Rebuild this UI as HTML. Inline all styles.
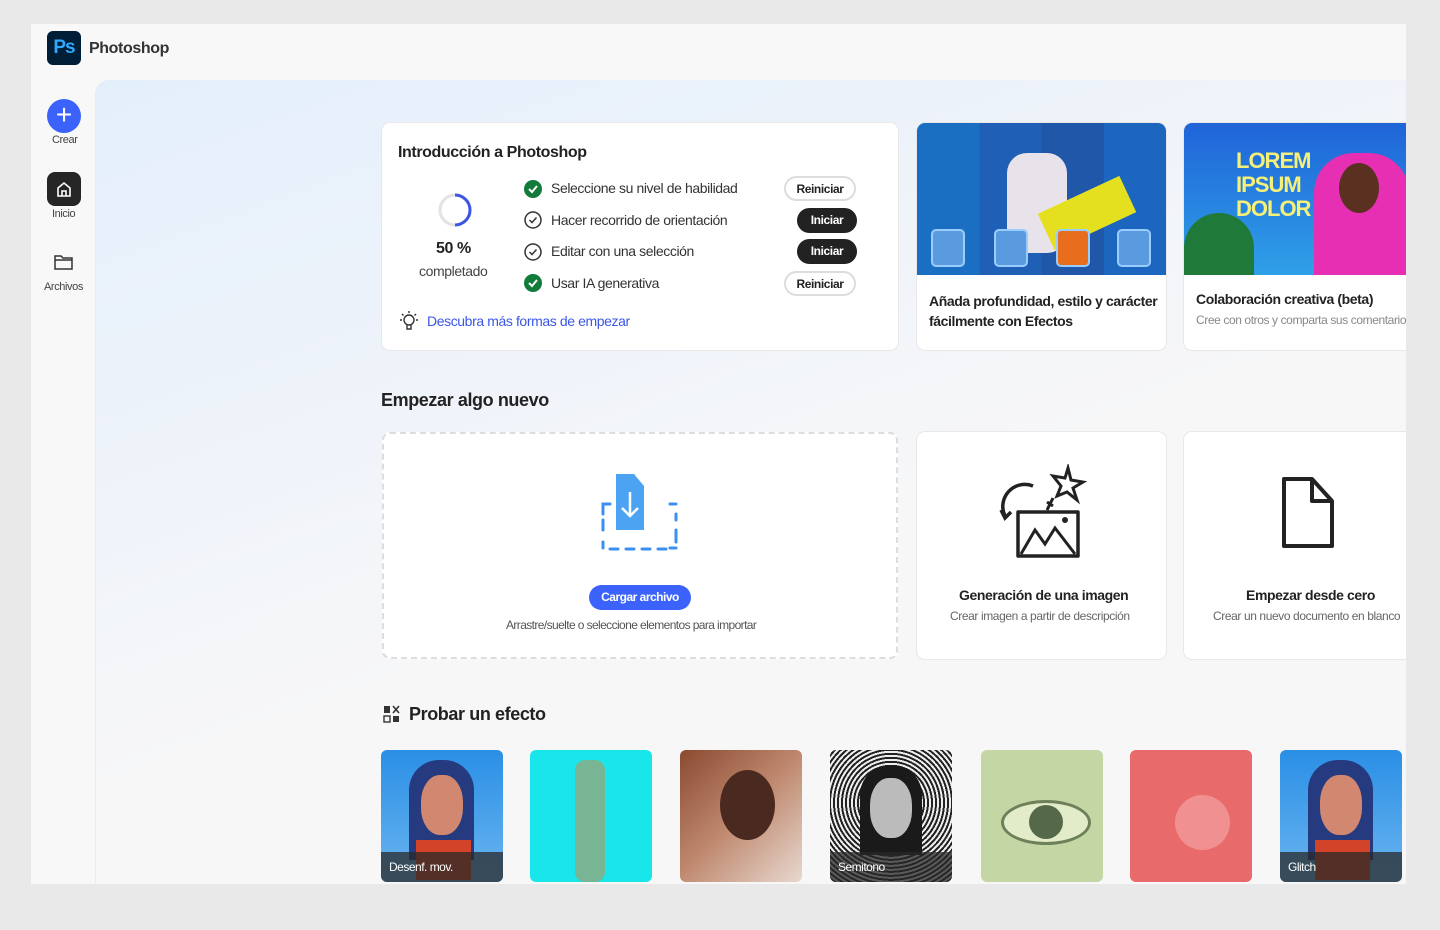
<!DOCTYPE html>
<html><head><meta charset="utf-8"><style>
*{box-sizing:border-box;margin:0;padding:0}
body{width:1440px;height:930px;background:#e9e9e9;font-family:"Liberation Sans",sans-serif;position:relative;overflow:hidden;color:#222}
.app{position:absolute;left:31px;top:24px;width:1375px;height:860px;background:#f8f8f8;overflow:hidden}
.main{position:absolute;left:64px;top:56px;width:1320px;height:820px;border-radius:14px 0 0 0;background:linear-gradient(160deg,#e4effc 0%,#eef3fa 30%,#f7f7f8 55%);border-left:1px solid #ececec}
.a{position:absolute}
.t{font-size:14px;letter-spacing:-0.4px;white-space:nowrap}
.card{position:absolute;background:#fff;border-radius:8px;box-shadow:0 0 0 1px #e8e8e8}
.btn{position:absolute;width:72px;height:25px;border-radius:13px;font-size:12px;font-weight:bold;text-align:center;line-height:23px;letter-spacing:-0.4px}
.bw{border:2px solid #ddd;background:#fff;color:#222}
.bb{background:#222;color:#fff;border:1px solid #222}
.eff{position:absolute;top:750px;width:122px;height:132px;border-radius:6px;overflow:hidden}
.lab{position:absolute;left:0;bottom:0;width:100%;height:30px;background:rgba(40,40,40,.75);color:#fff;font-size:12px;line-height:30px;padding-left:8px;letter-spacing:-0.5px}
</style></head><body>
<div class="app">
 <div class="a" style="left:16px;top:7px;width:34px;height:34px;background:#001e36;border-radius:6px;color:#31a8ff;font-weight:bold;font-size:19px;line-height:34px;text-align:center;letter-spacing:-1px">Ps</div>
 <div class="a t" style="left:58px;top:16px;font-size:16px;font-weight:bold;color:#333">Photoshop</div>
 <div class="a" style="left:16px;top:75px;width:34px;height:34px;border-radius:50%;background:#3b63fb;color:#fff;font-size:28px;line-height:32px;text-align:center">+</div>
 <div class="a t" style="left:21px;top:110px;font-size:11px;color:#444">Crear</div>
 <div class="a" style="left:16px;top:148px;width:34px;height:34px;border-radius:8px;background:#262626"><svg width="34" height="34"><path d="M11 16 L17 11 L23 16 V24 H11 Z M15 24 V19 H19 V24" fill="none" stroke="#fff" stroke-width="1.6"/></svg></div>
 <div class="a t" style="left:21px;top:184px;font-size:11px;color:#444">Inicio</div>
 <svg class="a" style="left:22px;top:229px" width="22" height="18"><path d="M2 3 H8 L10 5 H19 V16 H2 Z M2 7 H19" fill="none" stroke="#333" stroke-width="1.5"/></svg>
 <div class="a t" style="left:13px;top:257px;font-size:11px;color:#444">Archivos</div>
</div>
<div class="main" style="left:95px;top:80px"></div>

<div class="card" style="left:382px;top:123px;width:516px;height:227px">
 <div class="a t" style="left:16px;top:21px;font-size:16px;font-weight:bold">Introducción a Photoshop</div>
 <svg class="a" style="left:55px;top:69px" width="36" height="36"><circle cx="18" cy="18" r="15" fill="none" stroke="#e3e3e3" stroke-width="3"/><path d="M18 3 A15 15 0 0 1 18 33" fill="none" stroke="#3b55e6" stroke-width="3"/></svg>
 <div class="a t" style="left:54px;top:117px;font-size:16px;font-weight:bold">50 %</div>
 <div class="a t" style="left:37px;top:140px;font-size:14px;color:#444">completado</div>
 <svg class="a" style="left:141px;top:56px" width="20" height="120">
  <circle cx="10" cy="10" r="9" fill="#127a3b"/><path d="M6 10 L9 13 L14 7" fill="none" stroke="#fff" stroke-width="2"/>
  <circle cx="10" cy="41" r="8" fill="none" stroke="#333" stroke-width="1.5"/><path d="M6.5 41 L9 43.5 L13.5 38.5" fill="none" stroke="#333" stroke-width="1.5"/>
  <circle cx="10" cy="73" r="8" fill="none" stroke="#333" stroke-width="1.5"/><path d="M6.5 73 L9 75.5 L13.5 70.5" fill="none" stroke="#333" stroke-width="1.5"/>
  <circle cx="10" cy="104" r="9" fill="#127a3b"/><path d="M6 104 L9 107 L14 101" fill="none" stroke="#fff" stroke-width="2"/>
 </svg>
 <div class="a t" style="left:169px;top:57px;color:#333">Seleccione su nivel de habilidad</div>
 <div class="a t" style="left:169px;top:89px;color:#333">Hacer recorrido de orientación</div>
 <div class="a t" style="left:169px;top:120px;color:#333">Editar con una selección</div>
 <div class="a t" style="left:169px;top:152px;color:#333">Usar IA generativa</div>
 <div class="btn bw" style="left:402px;top:53px">Reiniciar</div>
 <div class="btn bb" style="left:415px;top:85px;width:60px">Iniciar</div>
 <div class="btn bb" style="left:415px;top:116px;width:60px">Iniciar</div>
 <div class="btn bw" style="left:402px;top:148px">Reiniciar</div>
 <svg class="a" style="left:17px;top:187px" width="20" height="22"><circle cx="10" cy="10" r="5" fill="none" stroke="#333" stroke-width="1.4"/><path d="M8 15 V19 H12 V15 M10 1 V3 M3 4 L4.5 5.5 M17 4 L15.5 5.5 M1 10 H3 M17 10 H19" stroke="#333" stroke-width="1.4" fill="none"/></svg>
 <div class="a t" style="left:45px;top:190px;color:#3b55e6">Descubra más formas de empezar</div>
</div>

<div class="card" style="left:917px;top:123px;width:249px;height:227px;overflow:hidden">
 <div class="a" style="left:0;top:0;width:249px;height:152px;background:linear-gradient(90deg,#1b6fc2 0 25%,#1f5fb5 25% 50%,#2157a8 50% 75%,#1c66c0 75%)"></div>
 <div class="a" style="left:90px;top:30px;width:60px;height:100px;background:#e8e2ea;border-radius:20px"></div>
 <div class="a" style="left:125px;top:70px;width:90px;height:40px;background:#e4e020;transform:rotate(-25deg)"></div>
 <div class="a" style="left:14px;top:106px;width:34px;height:38px;background:#5a9be0;border-radius:5px;border:2px solid #9cf"></div>
 <div class="a" style="left:77px;top:106px;width:34px;height:38px;background:#5a9be0;border-radius:5px;border:2px solid #9cf"></div>
 <div class="a" style="left:139px;top:106px;width:34px;height:38px;background:#e86e1e;border-radius:5px;border:2px solid #9cf"></div>
 <div class="a" style="left:200px;top:106px;width:34px;height:38px;background:#5a9be0;border-radius:5px;border:2px solid #9cf"></div>
 <div class="a t" style="left:12px;top:168px;font-weight:bold;font-size:14px;line-height:20px;white-space:normal;width:235px">Añada profundidad, estilo y carácter fácilmente con Efectos</div>
</div>

<div class="card" style="left:1184px;top:123px;width:240px;height:227px;overflow:hidden">
 <div class="a" style="left:0;top:0;width:240px;height:152px;background:linear-gradient(180deg,#1f64d8,#2fa0e8)"></div>
 <div class="a" style="left:0;top:90px;width:70px;height:62px;background:#1f7a3a;border-radius:40px 40px 0 0"></div>
 <div class="a" style="left:130px;top:30px;width:95px;height:122px;background:#e72fb3;border-radius:40px 40px 0 0"></div>
 <div class="a" style="left:155px;top:40px;width:40px;height:50px;background:#5a3020;border-radius:50%"></div>
 <div class="a" style="left:52px;top:26px;color:#f5f07a;font-weight:bold;font-size:22px;line-height:24px;letter-spacing:-1px">LOREM<br>IPSUM<br>DOLOR</div>
 <div class="a t" style="left:12px;top:168px;font-weight:bold">Colaboración creativa (beta)</div>
 <div class="a t" style="left:12px;top:190px;font-size:12px;color:#888">Cree con otros y comparta sus comentarios</div>
</div>

<div class="a t" style="left:381px;top:390px;font-size:18px;font-weight:bold">Empezar algo nuevo</div>
<div class="a" style="left:382px;top:432px;width:516px;height:227px;border:2px dashed #ddd;border-radius:8px;background:#fff"></div>
<svg class="a" style="left:598px;top:472px" width="84" height="80"><path d="M18 2 H36 L46 14 V58 H18 Z" fill="#4ba3f2"/><path d="M32 20 V44 M24 36 L32 44 L40 36" stroke="#fff" stroke-width="2.5" fill="none"/><path d="M12 32 H5 V42 M5 48 V58 M5 76 V70 M78 32 H72 M78 42 V48 M78 58 V70 M78 76 H72 M12 77 H20 M28 77 H36 M44 77 H52 M60 77 H68" stroke="#3a8ff0" stroke-width="3" fill="none" stroke-linecap="round"/></svg>
<div class="a" style="left:589px;top:585px;width:102px;height:25px;border-radius:13px;background:#3b63fb;color:#fff;font-size:12px;font-weight:bold;text-align:center;line-height:25px;letter-spacing:-0.5px">Cargar archivo</div>
<div class="a t" style="left:506px;top:618px;font-size:12px;color:#555;letter-spacing:-0.6px">Arrastre/suelte o seleccione elementos para importar</div>

<div class="card" style="left:917px;top:432px;width:249px;height:227px">
 <svg class="a" style="left:76px;top:32px" width="96" height="96"><path d="M25 48 H85 V92 H25 Z" fill="none" stroke="#222" stroke-width="3.5" stroke-linejoin="round"/><path d="M28 90 L42 66 L52 80 L62 64 L82 90" fill="none" stroke="#222" stroke-width="3"/><circle cx="72" cy="56" r="3" fill="#222"/><path d="M40 22 A22 22 0 0 0 12 52 M8 46 L12 54 L18 48" fill="none" stroke="#222" stroke-width="3.5"/><path d="M75 4 L78 16 L90 18 L80 24 L84 36 L74 28 L64 32 L68 22 L60 12 L72 14 Z" fill="none" stroke="#222" stroke-width="3"/><path d="M54 38 L60 42 M60 34 L54 46" stroke="#222" stroke-width="3"/></svg>
 <div class="a t" style="left:42px;top:155px;font-weight:bold">Generación de una imagen</div>
 <div class="a t" style="left:33px;top:177px;font-size:12px;color:#666">Crear imagen a partir de descripción</div>
</div>
<div class="card" style="left:1184px;top:432px;width:240px;height:227px">
 <svg class="a" style="left:94px;top:44px" width="60" height="76"><path d="M6 3 H34 L54 25 V70 H6 Z M34 3 V25 H54" fill="none" stroke="#222" stroke-width="4" stroke-linejoin="round"/></svg>
 <div class="a t" style="left:62px;top:155px;font-weight:bold">Empezar desde cero</div>
 <div class="a t" style="left:29px;top:177px;font-size:12px;color:#666">Crear un nuevo documento en blanco</div>
</div>

<svg class="a" style="left:383px;top:705px" width="18" height="18"><rect x="1" y="1" width="6" height="7" fill="#333"/><path d="M10 1 L16 8 M16 1 L10 8" stroke="#333" stroke-width="1.6"/><rect x="1" y="11" width="6" height="6" fill="none" stroke="#333" stroke-width="1.4"/><rect x="10" y="11" width="6" height="6" fill="#333"/></svg>
<div class="a t" style="left:409px;top:704px;font-size:18px;font-weight:bold">Probar un efecto</div>

<div class="eff" style="left:381px;background:linear-gradient(180deg,#2a8fe5,#6ab5f0)"><div class="a" style="left:28px;top:10px;width:65px;height:100px;background:#263a80;border-radius:30px 30px 0 0"></div><div class="a" style="left:40px;top:25px;width:42px;height:60px;background:#d28870;border-radius:45%"></div><div class="a" style="left:35px;top:90px;width:55px;height:40px;background:#d2432a"></div><div class="lab">Desenf. mov.</div></div>
<div class="eff" style="left:530px;background:#19e6ea"><div class="a" style="left:45px;top:10px;width:30px;height:122px;background:#a0a070;opacity:.7;border-radius:10px"></div></div>
<div class="eff" style="left:680px;background:linear-gradient(135deg,#8a4a30,#c08a70 50%,#e8d8d0)"><div class="a" style="left:40px;top:20px;width:55px;height:70px;background:#4a2a20;border-radius:50%"></div></div>
<div class="eff" style="left:830px;background:repeating-radial-gradient(circle at 50% 40%,#222 0 2px,#eee 2px 4px)"><div class="a" style="left:30px;top:15px;width:62px;height:90px;background:#1a1a1a;border-radius:30px 30px 0 0"></div><div class="a" style="left:40px;top:28px;width:42px;height:60px;background:#bbb;border-radius:45%"></div><div class="lab">Semitono</div></div>
<div class="eff" style="left:981px;background:#c4d6a4"><div class="a" style="left:20px;top:50px;width:90px;height:45px;background:#e2ecc8;border-radius:50%;border:3px solid #6d805a"></div><div class="a" style="left:48px;top:55px;width:34px;height:34px;background:#55684a;border-radius:50%"></div></div>
<div class="eff" style="left:1130px;background:#e96a6a"><div class="a" style="left:45px;top:45px;width:55px;height:55px;background:#f09090;border-radius:50%"></div></div>
<div class="eff" style="left:1280px;background:linear-gradient(180deg,#2a8fe5,#6ab5f0)"><div class="a" style="left:28px;top:10px;width:65px;height:100px;background:#263a80;border-radius:30px 30px 0 0"></div><div class="a" style="left:40px;top:25px;width:42px;height:60px;background:#d28870;border-radius:45%"></div><div class="a" style="left:35px;top:90px;width:55px;height:40px;background:#d2432a"></div><div class="lab">Glitch</div></div>

<div class="a" style="left:0;top:884px;width:1440px;height:46px;background:#e9e9e9"></div>
<div class="a" style="left:1406px;top:0;width:34px;height:930px;background:#e9e9e9"></div>
</body></html>
